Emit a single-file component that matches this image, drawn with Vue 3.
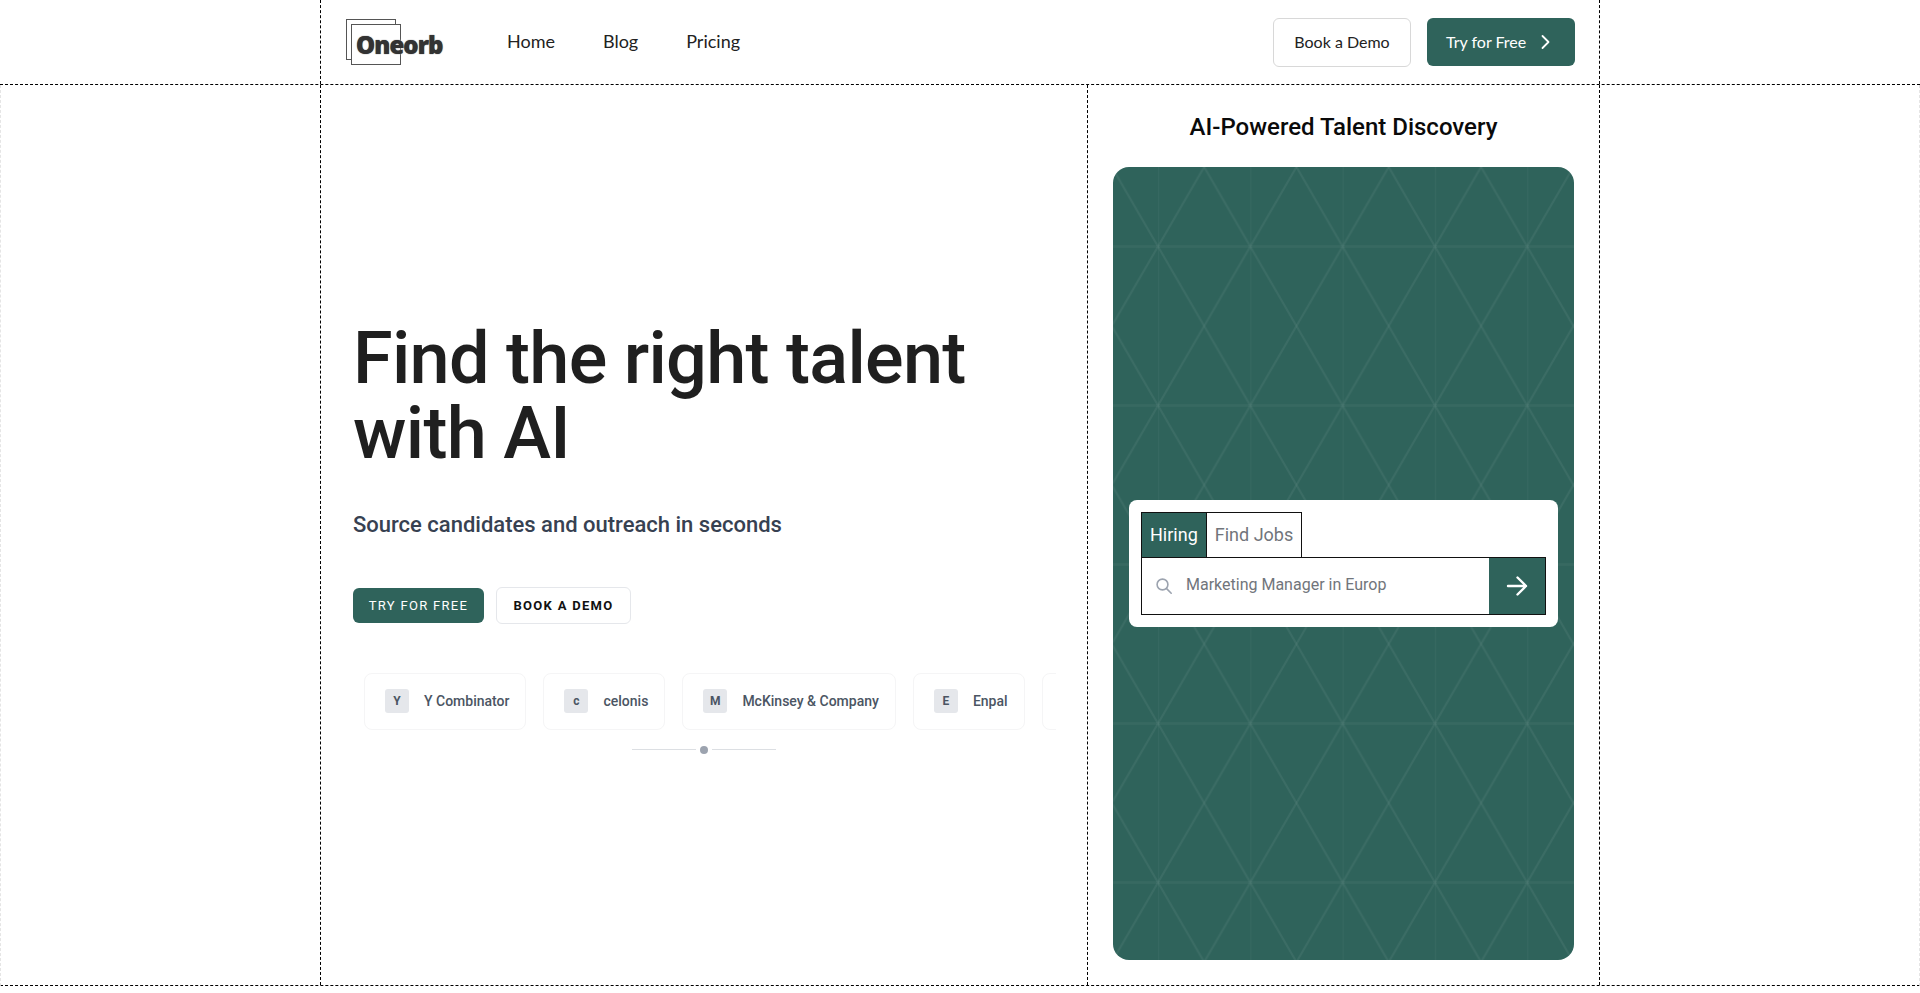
<script setup>
const links = ['Home', 'Blog', 'Pricing']

// last chip is cut off by the carousel edge, only its left side shows
const companies = [
  { name: 'Y Combinator', initial: 'Y' },
  { name: 'celonis', initial: 'c' },
  { name: 'McKinsey & Company', initial: 'M' },
  { name: 'Enpal', initial: 'E' },
  { name: '', initial: '' },
]
</script>

<template>
  <div class="page">
    <header class="topbar">
      <div class="topbar-inner">
        <a class="logo" href="#">
          <span class="logo-back"></span>
          <span class="logo-front"></span>
          <span class="logo-text">Oneorb</span>
        </a>
        <nav class="nav">
          <a v-for="link in links" :key="link" href="#">{{ link }}</a>
        </nav>
        <div class="actions">
          <button class="btn-outline"><span>Book a Demo</span></button>
          <button class="btn-solid">
            <span>Try for Free</span>
            <svg width="24" height="24" viewBox="0 0 24 24" fill="none" stroke="currentColor" stroke-width="1.8" stroke-linecap="round" stroke-linejoin="round">
              <path d="M9.5 6l6 6-6 6" />
            </svg>
          </button>
        </div>
      </div>
    </header>

    <main class="main">
      <div class="main-inner">
        <section class="hero">
          <h1>Find the right talent<br />with AI</h1>
          <p class="lead">Source candidates and outreach in seconds</p>
          <div class="cta">
            <button class="cta-solid">TRY FOR FREE</button>
            <button class="cta-outline">BOOK A DEMO</button>
          </div>
          <div class="carousel">
            <div class="track">
              <div v-for="c in companies" :key="c.name" class="chip">
                <span class="chip-icon">{{ c.initial }}</span>
                <span v-if="c.name" class="chip-name">{{ c.name }}</span>
              </div>
            </div>
          </div>
          <div class="pager">
            <span class="pager-line"></span>
            <span class="pager-dot"></span>
            <span class="pager-line"></span>
          </div>
        </section>

        <aside class="side">
          <h2>AI-Powered Talent Discovery</h2>
          <div class="panel">
            <svg class="lattice" width="100%" height="100%">
              <defs>
                <pattern id="lattice" x="45" y="0" width="92.3" height="159" patternUnits="userSpaceOnUse">
                  <g fill="none" stroke="#fff" stroke-opacity="0.06" stroke-width="2">
                    <path d="M46.15 0L0 79.5L46.15 159" />
                    <path d="M46.15 0L92.3 79.5L46.15 159" />
                  </g>
                  <path d="M0 79.5H92.3" stroke="#fff" stroke-opacity="0.04" stroke-width="2.5" />
                  <path d="M0 0V159" stroke="#fff" stroke-opacity="0.035" stroke-width="2" />
                </pattern>
              </defs>
              <rect width="100%" height="100%" fill="url(#lattice)" />
            </svg>
            <div class="search-card">
              <div class="tabs">
                <button class="tab active"><span>Hiring</span></button>
                <button class="tab"><span>Find Jobs</span></button>
              </div>
              <div class="search">
                <svg class="search-icon" width="18" height="18" viewBox="0 0 18 18" fill="none" stroke="#9ca3af" stroke-width="1.6" stroke-linecap="round">
                  <circle cx="7.5" cy="7.5" r="5.4" />
                  <path d="M11.6 11.6l4.6 4.6" />
                </svg>
                <span class="search-text">Marketing Manager in Europ</span>
                <button class="search-go">
                  <svg width="32" height="32" viewBox="0 0 32 32" fill="none" stroke="#fff" stroke-width="2.4" stroke-linecap="round" stroke-linejoin="round">
                    <path d="M7 16h18M16.5 7.5L25 16l-8.5 8.5" />
                  </svg>
                </button>
              </div>
            </div>
          </div>
        </aside>
      </div>
    </main>
  </div>
</template>

<style>
html,
body {
  margin: 0;
  background: #fff;
}
</style>

<style scoped>
.page {
  font-family: Roboto, sans-serif;
  color: #1f1f1f;
}

button {
  font: inherit;
  cursor: pointer;
}

.topbar {
  border-bottom: 1px dashed #000;
}

.topbar-inner {
  box-sizing: border-box;
  width: 1280px;
  height: 84px;
  margin: 0 auto;
  padding: 0 24px 0 25px;
  display: flex;
  align-items: center;
  border-left: 1px dashed #000;
  border-right: 1px dashed #000;
  font-family: Lato, sans-serif;
}

.logo {
  position: relative;
  display: block;
  width: 100px;
  height: 46px;
  text-decoration: none;
  margin-top: -1px;
}

.logo-back,
.logo-front {
  position: absolute;
  width: 48px;
  height: 39px;
  border: 1px solid #555;
  background: #fff;
}

.logo-back {
  left: 0;
  top: 0;
}

.logo-front {
  left: 5px;
  top: 5px;
}

.logo-text {
  position: absolute;
  left: 10px;
  top: 8px;
  font-family: "Open Sans", sans-serif;
  font-weight: 800;
  font-size: 24px;
  line-height: 36px;
  letter-spacing: -0.9px;
  color: #333;
  text-shadow: 0 0 1px #333, 0 0 2px #fff;
}

.nav {
  display: flex;
  gap: 48px;
  margin-left: 61px;
  margin-top: -3px;
  font-size: 18px;
}

.nav a {
  color: #222;
  text-decoration: none;
}

.actions {
  margin-left: auto;
  display: flex;
  align-items: center;
  gap: 16px;
}

.btn-outline {
  box-sizing: border-box;
  width: 138px;
  height: 49px;
  background: #fff;
  border: 1px solid #d8d8d8;
  border-radius: 6px;
  font-size: 16px;
  color: #222;
}

.btn-outline span,
.btn-solid span {
  position: relative;
  top: -1px;
}

.btn-solid {
  box-sizing: border-box;
  height: 48px;
  width: 148px;
  padding: 0 0 0 19px;
  display: flex;
  align-items: center;
  gap: 7px;
  background: #2f635b;
  border: none;
  border-radius: 6px;
  font-size: 16px;
  color: #fff;
}

.main-inner {
  box-sizing: border-box;
  width: 1280px;
  height: 900px;
  margin: 0 auto;
  display: flex;
  border-left: 1px dashed #000;
  border-right: 1px dashed #000;
}

.main {
  border-left: 1px dashed #e5e5e5;
  border-right: 1px dashed #e5e5e5;
  border-bottom: 1px dashed #000;
}

.hero {
  box-sizing: border-box;
  width: 767px;
  padding: 4px 31px 0 32px;
  display: flex;
  flex-direction: column;
  justify-content: center;
  border-right: 1px dashed #000;
}

h1 {
  margin: 0;
  font-weight: 500;
  font-size: 72px;
  line-height: 75px;
  letter-spacing: -0.7px;
  color: #1f1f1f;
}

.lead {
  margin: 39px 0 0;
  font-size: 22px;
  line-height: 30px;
  font-weight: 500;
  color: #374151;
}

.cta {
  margin-top: 47px;
  display: flex;
  align-items: center;
  gap: 12px;
}

.cta-solid {
  box-sizing: border-box;
  width: 131px;
  height: 35px;
  padding: 0;
  background: #2f635b;
  border: none;
  border-radius: 6px;
  color: #fff;
  font-size: 13px;
  letter-spacing: 1.3px;
}

.cta-outline {
  box-sizing: border-box;
  width: 135px;
  height: 37px;
  padding: 0;
  background: #fff;
  border: 1px solid #e5e7eb;
  border-radius: 6px;
  color: #111;
  font-size: 13px;
  font-weight: 700;
  letter-spacing: 1.3px;
}

.carousel {
  margin-top: 49px;
  overflow: hidden;
}

.track {
  display: flex;
  gap: 17px;
  margin-left: 11px;
  width: max-content;
}

.chip {
  box-sizing: border-box;
  height: 57px;
  padding: 0 16px 0 20px;
  display: flex;
  align-items: center;
  gap: 15px;
  background: #fff;
  border: 1px solid #f5f5f6;
  border-radius: 8px;
}

.chip-icon {
  width: 24px;
  height: 24px;
  display: flex;
  align-items: center;
  justify-content: center;
  background: #e5e7eb;
  border-radius: 3px;
  font-size: 12px;
  font-weight: 700;
  color: #4b5563;
}

.chip-name {
  font-size: 14px;
  font-weight: 500;
  color: #4b5563;
}

.pager {
  margin: 16px 0 0 279px;
  display: flex;
  align-items: center;
  gap: 4px;
  width: 144px;
}

.pager-line {
  width: 64px;
  height: 1px;
  background: #dcdfe3;
}

.pager-dot {
  width: 8px;
  height: 8px;
  border-radius: 50%;
  background: #9ca3af;
}

.side {
  flex: 1;
  box-sizing: border-box;
  padding: 24px 25px 25px;
  display: flex;
  flex-direction: column;
}

h2 {
  margin: 0;
  text-align: center;
  font-weight: 500;
  font-size: 24px;
  line-height: 36px;
  color: #0a0a0a;
}

.panel {
  position: relative;
  flex: 1;
  margin-top: 22px;
  background: #2f635b;
  border-radius: 16px;
  overflow: hidden;
  display: flex;
  align-items: center;
}

.lattice {
  position: absolute;
  inset: 0;
}

.search-card {
  position: relative;
  box-sizing: border-box;
  width: 429px;
  height: 127px;
  margin: 0 16px;
  padding: 12px;
  background: #fff;
  border-radius: 8px;
}

.tabs {
  display: flex;
}

.tab {
  box-sizing: border-box;
  height: 46px;
  margin-right: -1px;
  padding: 0 8px;
  background: #fff;
  border: 1px solid #111;
  font-size: 18px;
  color: #71757b;
}

.tab span {
  position: relative;
  top: -1px;
}

.tab.active {
  background: #2f635b;
  color: #fff;
}

.search {
  box-sizing: border-box;
  height: 58px;
  margin-top: -1px;
  display: flex;
  align-items: center;
  border: 1px solid #111;
}

.search-icon {
  margin-left: 13px;
}

.search-text {
  margin-left: 13px;
  font-size: 16px;
  color: #71757b;
  margin-top: -3px;
}

.search-go {
  margin-left: auto;
  width: 56px;
  height: 100%;
  padding: 0;
  display: flex;
  align-items: center;
  justify-content: center;
  background: #2f635b;
  border: none;
}
</style>
